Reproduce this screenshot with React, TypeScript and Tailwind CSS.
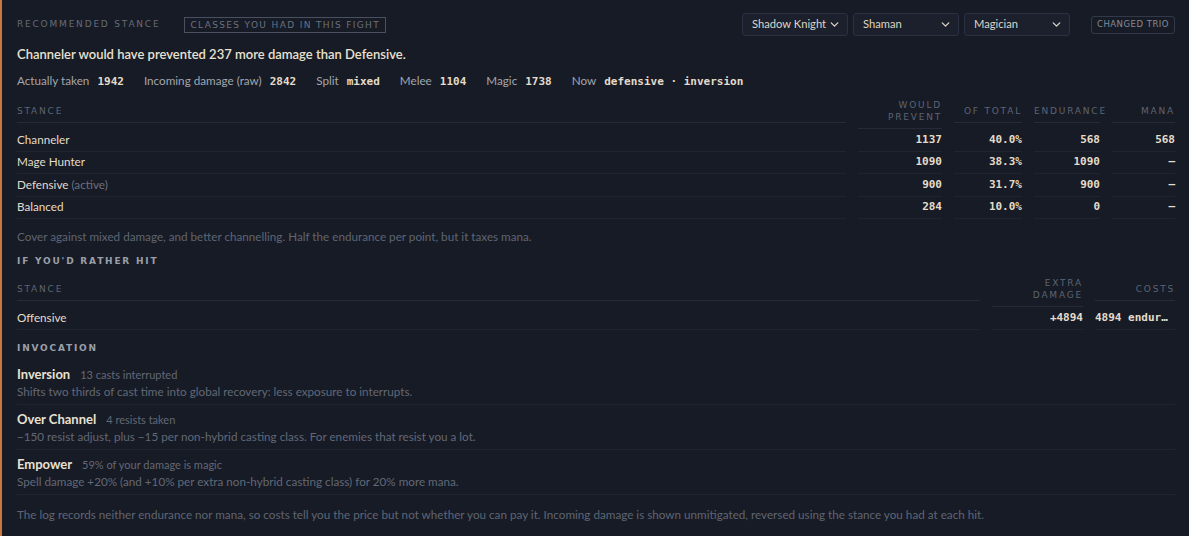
import { ChevronDown } from "lucide-react"

const body = "font-['Lato','Open_Sans',sans-serif]"
const mono = "font-['DejaVu_Sans_Mono',monospace] font-bold text-[11px] text-[#e4dcca]"
const label = "font-['DejaVu_Sans',sans-serif] text-[9px] tracking-[0.2em] uppercase"

const stances = [
    { name: "Channeler", prevent: "1137", total: "40.0%", endurance: "568", mana: "568" },
    { name: "Mage Hunter", prevent: "1090", total: "38.3%", endurance: "1090", mana: "–" },
    { name: "Defensive", active: true, prevent: "900", total: "31.7%", endurance: "900", mana: "–" },
    { name: "Balanced", prevent: "284", total: "10.0%", endurance: "0", mana: "–" },
]

const stats = [
    ["Actually taken", "1942"],
    ["Incoming damage (raw)", "2842"],
    ["Split", "mixed"],
    ["Melee", "1104"],
    ["Magic", "1738"],
    ["Now", "defensive · inversion"],
]

const invocations = [
    {
        name: "Inversion",
        note: "13 casts interrupted",
        text: "Shifts two thirds of cast time into global recovery: less exposure to interrupts.",
    },
    {
        name: "Over Channel",
        note: "4 resists taken",
        text: "−150 resist adjust, plus −15 per non-hybrid casting class. For enemies that resist you a lot.",
    },
    {
        name: "Empower",
        note: "59% of your damage is magic",
        text: "Spell damage +20% (and +10% per extra non-hybrid casting class) for 20% more mana.",
    },
]

function ClassSelect({ value }: { value: string }) {
    return (
        <div className="flex h-[23px] w-[106px] items-center justify-between whitespace-nowrap rounded-[3px] border border-[#2b3142] bg-[#1b202c] pl-[9px] pr-[6px] text-[11.2px] text-[#ddd6c6]">
            <span>{value}</span>
            <ChevronDown className="h-[13px] w-[13px] shrink-0 text-[#d8d2c4]" strokeWidth={2.5} />
        </div>
    )
}

function HeadCell({ children, right }: { children: React.ReactNode; right?: boolean }) {
    return (
        <div className={`border-b border-[#262b37] pb-[5px] leading-[12px] text-[#5d6473] ${label} ${right ? "text-right" : ""}`}>
            {children}
        </div>
    )
}

function Cell({ children, right }: { children: React.ReactNode; right?: boolean }) {
    return (
        <div className={`flex h-[22.5px] min-w-0 items-center border-b border-[#1f2430] ${right ? "justify-end" : ""}`}>
            {children}
        </div>
    )
}

export default function App() {
    return (
        <div className={`min-h-screen bg-[#171b25] ${body}`}>
            <div className="min-h-[536px] border-l-2 border-[#c9773b] pb-3 pl-[15px] pr-[14px] pt-3">
                <div className="flex h-[23px] items-center pt-[2px]">
                    <span className={`${label} text-[#656b7a]`}>Recommended stance</span>
                    <span className={`ml-[24px] border border-[#4a5060] px-[5px] py-[1px] leading-[12px] ${label} text-[8.5px] tracking-[0.15em] text-[#6b7180]`}>
                        Classes you had in this fight
                    </span>
                    <div className="ml-auto flex items-center gap-[5px]">
                        <ClassSelect value="Shadow Knight" />
                        <ClassSelect value="Shaman" />
                        <ClassSelect value="Magician" />
                    </div>
                    <button className="ml-[21px] h-[18px] w-[84px] rounded-[3px] border border-[#333948] font-['DejaVu_Sans',sans-serif] text-[8.5px] tracking-[0.06em] text-[#858b98]">
                        CHANGED TRIO
                    </button>
                </div>

                <p className="mt-[9px] text-[13px] font-semibold leading-[20px] text-[#e8e1d2]">
                    Channeler would have prevented 237 more damage than Defensive.
                </p>

                <div className="mt-[8px] flex items-baseline gap-[20px] text-[11.7px] leading-[16px] text-[#a3a6ad]">
                    {stats.map(([k, v]) => (
                        <span key={k} className="flex items-baseline gap-[8px]">
                            {k}
                            <span className={mono}>{v}</span>
                        </span>
                    ))}
                </div>

                <div className="mt-[9px] grid grid-cols-[1fr_84px_68px_66px_63px] items-center gap-x-3 text-[11.7px] text-[#e4dccb]">
                    <HeadCell>Stance</HeadCell>
                    <HeadCell right>
                        Would
                        <br />
                        prevent
                    </HeadCell>
                    <HeadCell right>Of total</HeadCell>
                    <HeadCell right>Endurance</HeadCell>
                    <HeadCell right>Mana</HeadCell>
                    {stances.map((s) => (
                        <div key={s.name} className="contents">
                            <Cell>
                                {s.name}
                                {s.active && <span className="ml-[3px] text-[#6b7180]">(active)</span>}
                            </Cell>
                            <Cell right>
                                <span className={mono}>{s.prevent}</span>
                            </Cell>
                            <Cell right>
                                <span className={mono}>{s.total}</span>
                            </Cell>
                            <Cell right>
                                <span className={mono}>{s.endurance}</span>
                            </Cell>
                            <Cell right>
                                <span className={mono}>{s.mana}</span>
                            </Cell>
                        </div>
                    ))}
                </div>

                <p className="mt-[9px] text-[11.7px] leading-[16px] text-[#5f6574]">
                    Cover against mixed damage, and better channelling. Half the endurance per point, but it taxes mana.
                </p>

                <h3 className={`mt-[11px] leading-[12px] font-bold text-[#9a9fab] ${label}`}>If you'd rather hit</h3>

                <div className="mt-[10px] grid grid-cols-[1fr_91px_80px] items-center gap-x-3 text-[11.7px] text-[#e4dccb]">
                    <HeadCell>Stance</HeadCell>
                    <HeadCell right>
                        Extra
                        <br />
                        damage
                    </HeadCell>
                    <HeadCell right>Costs</HeadCell>
                    <Cell>Offensive</Cell>
                    <Cell right>
                        <span className={mono}>+4894</span>
                    </Cell>
                    <Cell>
                        <span className={`${mono} block truncate pr-[6px]`}>4894 endurance</span>
                    </Cell>
                </div>

                <h3 className={`mt-[12px] leading-[12px] font-bold text-[#9a9fab] ${label}`}>Invocation</h3>

                <div className="mt-[6px]">
                    {invocations.map((inv) => (
                        <div key={inv.name} className="border-b border-[#1f2430] pb-[4px] pt-[6px]">
                            <div className="flex items-baseline gap-[10px] leading-[17px]">
                                <span className="text-[13px] font-bold text-[#e8e1d2]">{inv.name}</span>
                                <span className="text-[11px] text-[#626877]">{inv.note}</span>
                            </div>
                            <p className="text-[11.7px] leading-[17px] text-[#626877]">{inv.text}</p>
                        </div>
                    ))}
                </div>

                <p className="mt-[11px] text-[11.7px] leading-[16px] text-[#5f6574]">
                    The log records neither endurance nor mana, so costs tell you the price but not whether you can pay it.
                    Incoming damage is shown unmitigated, reversed using the stance you had at each hit.
                </p>
            </div>
        </div>
    )
}
